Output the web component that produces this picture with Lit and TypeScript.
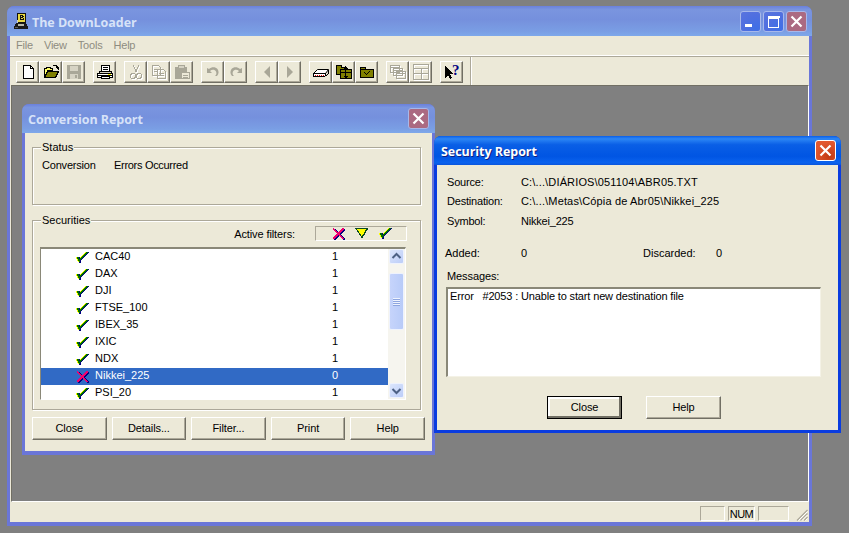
import { LitElement, html, css, svg } from "lit";
import { customElement } from "lit/decorators.js";

const ico = (body: unknown, cls = "") =>
  html`<svg class="ico ${cls}" viewBox="0 0 16 16" width="16" height="16" shape-rendering="crispEdges">${body}</svg>`;

const I = {
  newDoc: ico(svg`<path d="M3.500 1.500h7l3 3v10h-10z" fill="#fff" stroke="#000"/><path d="M10.500 1.500v3h3" fill="none" stroke="#000"/>`),
  open: ico(svg`<path d="M1.500 13.500v-9h2v-1h4v1h2v2h-5l-3 7z" fill="#ffff66" stroke="#000"/><path d="M1.500 13.500l3-6h11l-3 6z" fill="#808000" stroke="#000"/><path d="M10 1.500h3l2 2v2M15 5l-1.500-1.500M15 5l1-1.500" fill="none" stroke="#000"/>`),
  save: ico(svg`<rect x="1" y="1" width="14" height="14" fill="#a9a798"/><rect x="4" y="2" width="8" height="5" fill="#d6d3c4"/><rect x="4" y="10" width="8" height="5" fill="#d6d3c4"/><rect x="9" y="11" width="2" height="3" fill="#a9a798"/>`),
  print: ico(svg`<path d="M4.500 1.500h8v6h-8z" fill="#fff" stroke="#000"/><path d="M2.500 7.500h12v5h-12z" fill="#d6d3c4" stroke="#000"/><path d="M0.500 9.500h15v4h-15z" fill="#fff" stroke="#000"/><path d="M4.500 12.500h8v2h-8z" fill="#fff" stroke="#000"/><path d="M6 3.500h5M6 5.500h5M1 11.500h14" stroke="#000"/><rect x="11" y="10" width="3" height="1" fill="#ffff00"/>`),
  cut: ico(svg`<g class="off"><path d="M5.500 1.500l3 7M10.500 1.500l-3 7"/><circle cx="5" cy="12" r="2.500"/><circle cx="11" cy="12" r="2.500"/></g>`),
  copy: ico(svg`<g class="off"><path d="M1.500 1.500h6l2 2v8h-8z"/><path d="M6.500 5.500h6l2 2v7h-8z"/><path d="M3 5h4M3 7h3M8 9h5M8 11h5"/></g>`),
  paste: ico(svg`<rect x="1" y="3" width="12" height="12" rx="1" fill="#a9a798"/><rect x="4" y="1" width="6" height="3" fill="#d6d3c4" stroke="#a9a798"/><path d="M7.500 8.500h8v6h-8z" fill="#ece9d8" stroke="#a9a798"/><path d="M9 11h5M9 13h5" stroke="#a9a798"/>`),
  undo: ico(svg`<path d="M2 4v5h5l-2-2c2-2 5-1.500 6 .5 1 2 0 3.500-1 4.500h2c2-2 2-5 .5-7-2-2.500-6-2.500-8.500 0z" fill="#a9a798" shape-rendering="auto"/>`),
  redo: ico(svg`<path d="M14 4v5H9l2-2C9 5 6 5.500 5 7.500c-1 2 0 3.500 1 4.500H4C2 10 2 7 3.500 5c2-2.500 6-2.500 8.500 0z" fill="#a9a798" shape-rendering="auto"/>`),
  back: ico(svg`<path d="M11 2v12L5 8z" fill="#a9a798" shape-rendering="auto"/>`),
  fwd: ico(svg`<path d="M5 2v12l6-6z" fill="#a9a798" shape-rendering="auto"/>`),
  modem: ico(svg`<path d="M0.500 9.500l4-4h11l-3 4z" fill="#fff" stroke="#000" shape-rendering="auto"/><path d="M0.500 9.500h12v3h-12z" fill="#fff" stroke="#000"/><path d="M12.500 12.500l3-3v-4" fill="#d6d3c4" stroke="#000"/><path d="M2 11h1M4 11h1M6 11h1M8 11h1M10 11h1" stroke="#e00000"/>`),
  folderMove: ico(svg`<path d="M0.500 1.500h5v2h5v7h-10z" fill="#808000" stroke="#000"/><path d="M4.500 5.500h11v9h-11z" fill="#808000" stroke="#000"/><path d="M9.500 2v12M7.500 4h4M8.500 3h2M7.500 12h4M8.500 13h2M5 8.500h10" stroke="#000"/>`),
  folderCheck: ico(svg`<path d="M1.500 3.500h5v2h8v8h-13z" fill="#808000" stroke="#000"/><path d="M2 5.500h12" stroke="#000"/><path d="M5 8h1v1h1v1h1V9h1V8h1V7h1v1h-1v1H9v1H8v1H7v-1H6V9H5z" fill="#000"/>`),
  cascade: ico(svg`<g class="off"><path d="M0.500 1.500h9v7h-9z"/><path d="M3.500 4.500h9v7h-9z"/><path d="M6.500 7.500h9v7h-9z"/><path d="M1 3.500h8M4 6.500h8M7 9.500h8"/></g>`),
  tile: ico(svg`<g class="off"><path d="M0.500 0.500h15v15h-15z"/><path d="M1 4.500h14M1 9.500h14M8 5v10"/></g>`),
  help: html`<svg class="ico" viewBox="0 0 16 16" width="16" height="16" shape-rendering="crispEdges"><path d="M1 2v12l3-3 2 4 2-1-2-4h4z" fill="#000"/><text class="qm" x="8" y="11">?</text></svg>`,
};

/* pixel runs [x, y, width] turned into one path */
const runs = (list: number[][]) => list.map(([x, y, w]) => `M${x} ${y}h${w}v1h-${w}z`).join("");
const checkYellow = runs([[9,0,1],[8,1,1],[7,2,1],[6,3,1],[5,4,1],[4,5,1],[0,5,1],[3,6,1],[0,6,1],[1,7,1],[1,8,1],[2,9,1]]);
const checkGreen = runs([[10,0,2],[9,1,2],[8,2,2],[7,3,2],[6,4,2],[5,5,2],[1,5,2],[4,6,2],[1,6,2],[2,7,3],[2,8,2],[3,9,1]]);
const checkNavy = runs([[12,0,1],[11,1,1],[10,2,1],[9,3,1],[8,4,1],[7,5,1],[3,5,1],[6,6,1],[3,6,1],[5,7,1],[4,8,1],[4,9,1],[3,10,2]]);
const check = svg`<g transform="translate(0 1)"><path d=${checkYellow} fill="#ffff00"/><path d=${checkGreen} fill="#007000"/><path d=${checkNavy} fill="#000080"/></g>`;
const cross = svg`<path d="M1.500 1.500l10.500 10.500M12 1.500l-10.500 10.500" transform="translate(.8 .8)" stroke="#000080" stroke-width="2"/><path d="M1 1.500l10.500 10.500M11.500 1.500l-10.500 10.500" stroke="#f0006e" stroke-width="2"/>`;
const tri = svg`<path d="M1 1.500h11.500l-5.500 9z" fill="#ffff00" stroke="#0a4a20" stroke-width="1.300"/>`;
const mark = (b: unknown) => html`<svg class="mark" viewBox="0 0 13 13" width="13" height="13">${b}</svg>`;

const glyph = {
  min: html`<svg viewBox="0 0 21 21" width="21" height="21" shape-rendering="crispEdges"><rect x="5" y="13" width="7" height="3" fill="#fff"/></svg>`,
  max: html`<svg viewBox="0 0 21 21" width="21" height="21" shape-rendering="crispEdges"><path d="M5 5.500h11v1h-11zM5.500 5v11h10V5" fill="none" stroke="#fff"/><rect x="5" y="5" width="11" height="3" fill="#fff"/></svg>`,
  close: html`<svg viewBox="0 0 21 21" width="21" height="21"><path d="M5.500 5.500l10 10M15.500 5.500l-10 10" stroke="#fff" stroke-width="2.200"/></svg>`,
};

const up = html`<svg viewBox="0 0 15 15" width="15" height="15"><path d="M3.500 9l4-4 4 4" fill="none" stroke="#4d6185" stroke-width="2"/></svg>`;
const down = html`<svg viewBox="0 0 15 15" width="15" height="15"><path d="M3.500 6l4 4 4-4" fill="none" stroke="#4d6185" stroke-width="2"/></svg>`;

const toolGroups = [
  [I.newDoc, I.open, I.save],
  [I.print],
  [I.cut, I.copy, I.paste],
  [I.undo, I.redo],
  [I.back, I.fwd],
  [I.modem, I.folderMove, I.folderCheck],
  [I.cascade, I.tile],
  [I.help],
];

const rows: [string, number, boolean][] = [
  ["CAC40", 1, true], ["DAX", 1, true], ["DJI", 1, true], ["FTSE_100", 1, true],
  ["IBEX_35", 1, true], ["IXIC", 1, true], ["NDX", 1, true], ["Nikkei_225", 0, false], ["PSI_20", 1, true],
];

@customElement("app-root")
export class AppRoot extends LitElement {
  static styles = css`
    :host { display:block; position:relative; width:849px; height:533px; background:#808080; overflow:hidden;
      font:11px "Liberation Sans", Arial, sans-serif; letter-spacing:-.2px; color:#000; }
    .win { position:absolute; display:flex; flex-direction:column; box-sizing:border-box; border-radius:7px 7px 0 0;
      background:#6a76d8; }
    .main { left:7px; top:6px; width:805px; height:520px; padding:0 3px 4px; }
    .conv { left:22px; top:104px; width:413px; height:351px; padding:0 3px 4px; }
    .sec { left:434px; top:136px; width:407px; height:297px; padding:0 3px 3px; background:#0a3ce0; }

    .title { display:flex; align-items:center; flex:none; margin:0 -3px; padding:0 3px 0 7px; border-radius:7px 7px 0 0;
      background:linear-gradient(180deg,#6a80dc 0,#7a95df 12%,#7590dd 45%,#7a9ee4 85%,#7ea8ea 100%); }
    .main > .title { height:30px; padding-right:5px; }
    .conv > .title { height:29px; padding:0 6px 0 6px; }
    .sec > .title { height:29px; padding:0 5px 0 7px;
      background:linear-gradient(180deg,#0a5fe8 0,#2c86f5 10%,#0a5fe6 30%,#0055e3 70%,#0a62ee 92%,#0a55dc 100%); }
    .cap { flex:1; font:bold 12.500px "Open Sans","Liberation Sans",sans-serif; color:#d6e2f8; white-space:nowrap; letter-spacing:-.05px; padding-top:1px; }
    .main .cap { padding-top:3px; }
    .sec .cap { color:#fff; text-shadow:1px 1px 0 #0f1f80; }
    .appicon { margin-right:4px; flex:none; }
    .caps { display:flex; gap:2px; }
    .cb { width:21px; height:21px; box-sizing:border-box; border-radius:3px; border:1px solid #a7b8ea;
      background:radial-gradient(circle at 80% 85%,#3f6fe6,#4f6fe0 55%,#5a74de); display:flex; align-items:center; justify-content:center; }
    .cb svg { margin:-1px; flex:none; }
    .cb.x { background:#ab6a82; }
    .sec .cb.x { background:radial-gradient(circle at 70% 80%,#c23a14,#e2582f 70%); border-color:#fff; }

    .client { flex:1; min-height:0; background:#ece9d8; display:flex; flex-direction:column; }
    .menubar { height:20px; flex:none; box-sizing:border-box; display:flex; align-items:center; gap:11px; padding:0 0 1px 6px; color:#8e8c80;
      border-bottom:1px solid #fff; box-shadow:0 1px 0 #aca899; }
    .toolbar { height:28px; flex:none; margin-top:1px; box-sizing:border-box; display:flex; gap:8px; padding:4px 0 0 6px; }
    .tgroup { display:flex; }
    .tb { width:23px; height:22px; box-sizing:border-box; display:flex; align-items:center; justify-content:center;
      border:1px solid; border-color:#fff #716f64 #716f64 #fff; box-shadow:inset -1px -1px 0 #aca899; }
    .sep { width:0; height:28px; margin:-4px 0 0 -1px; border-left:1px solid #aca899; border-right:1px solid #fff; }
    .ico { display:block; overflow:visible; }
    .off { fill:none; stroke:#a9a798; filter:drop-shadow(1px 1px 0 #fff); }
    .qm { font:bold 15px "Liberation Serif",serif; fill:#000080; }

    .mdi { flex:1; min-height:0; margin:0 0 0 1px; background:#808080; border-style:solid; border-width:1px;
      border-color:#716f64 #fff #fff #716f64; }
    .status { height:20px; flex:none; box-sizing:border-box; display:flex; justify-content:flex-end; align-items:flex-end; gap:3px; padding:0 1px 1px 0; }
    .pane { height:15px; box-sizing:border-box; border:1px solid; border-color:#aca899 #fff #fff #aca899; line-height:14px; text-align:center; }
    .p1 { width:25px; } .p2 { width:27px; letter-spacing:-.5px; } .p3 { width:31px; }
    .grip { margin-left:4px; }

    .cclient { padding:14px 7px 0; gap:0; }
    .group { position:relative; box-sizing:border-box; border:1px solid #aca899; box-shadow:1px 1px 0 #fff, inset 1px 1px 0 #fff; width:389px; }
    .legend { position:absolute; left:8px; top:-8px; padding:0 1px; background:#ece9d8; line-height:14px; letter-spacing:0; }
    .gstatus { height:58px; padding:11px 9px 0; display:flex; }
    .gstatus .k { width:72px; }
    .gstatus span:last-child { letter-spacing:-.3px; }
    .gsec { height:190px; margin-top:15px; padding:5px 14px 0 7px; }
    .filters { display:flex; justify-content:flex-end; align-items:center; gap:20px; height:15px; margin-right:-1px; letter-spacing:-.1px; }
    .fbox { width:92px; height:15px; box-sizing:border-box; border:1px solid; border-color:#aca899 #fff #fff #aca899;
      padding-left:16px; display:flex; align-items:center; gap:10px; }
    .fbox .mark:last-child { margin-left:1px; }
    .mark { display:block; flex:none; overflow:visible; shape-rendering:crispEdges; }
    .list { width:366px; height:153px; margin:6px 0 0; box-sizing:border-box; display:flex; overflow:hidden; background:#fff;
      border-style:solid; border-width:2px 1px 1px; border-color:#8a8878 #fff #fff #8a8878; letter-spacing:0; }
    .rows { width:347px; flex:none; overflow:hidden; }
    .row { display:grid; grid-template-columns:36px 18px 237px 1fr; height:17px; align-items:center; }
    .row span { line-height:15px; padding-bottom:2px; }
    .row .mark { margin-left:-1px; margin-top:-1px; }
    .row.on { background:#316ac5; color:#fff; }
    .sb { width:17px; flex:none; background:#f6f5ef; display:flex; flex-direction:column; padding:0 1px; box-sizing:border-box; }
    .sbb { width:15px; height:15px; flex:none; border:1px solid #eef2fd; box-sizing:border-box; border-radius:2px;
      background:linear-gradient(135deg,#dce6fc,#bccdf8); display:flex; align-items:center; justify-content:center; }
    .sbb svg { margin:-1px; flex:none; }
    .thumb { width:15px; height:57px; margin:9px 0 auto; box-sizing:border-box; border:1px solid #eef2fd; border-radius:2px;
      background:linear-gradient(90deg,#c6d4fb,#b8cbf8); display:flex; flex-direction:column; align-items:center; justify-content:center; gap:1px; }
    .thumb i { display:block; width:7px; height:1px; background:#eef3fe; box-shadow:0 1px 0 #8ea6e0; }
    .sbb.dn { margin-bottom:1px; }
    .btns { display:flex; }
    .cbtns { gap:5px; margin-top:7px; }
    .btn { width:75px; height:23px; box-sizing:border-box; display:flex; align-items:center; justify-content:center;
      border:1px solid; border-color:#fff #716f64 #716f64 #fff; box-shadow:inset -1px -1px 0 #aca899; background:#ece9d8; padding-bottom:1px; letter-spacing:-.1px; }
    .btn.def { outline:1px solid #000; outline-offset:-1px; box-shadow:inset -2px -2px 0 #716f64, inset 2px 2px 0 #fff; }

    .sclient { padding:7px 0 0 10px; }
    .info { display:grid; grid-template-columns:74px 1fr; grid-template-rows:19px 20px 20px; align-items:center; }
    .info .path { letter-spacing:.15px; }
    .nums { display:grid; grid-template-columns:76px 122px 73px 1fr; height:20px; margin:12px 0 0 -2px; align-items:center; letter-spacing:0; }
    .msgl { height:16px; line-height:16px; margin-top:5px; letter-spacing:-.1px; }
    .msgs { width:375px; height:90px; margin:3px 0 0 -1px; box-sizing:border-box; background:#fff; padding:1px 2px;
      border:1px solid; border-width:2px 1px 1px 2px; border-color:#8a8878 #f4f2e6 #f4f2e6 #8a8878; white-space:pre; letter-spacing:-.15px; }
    .sbtns { gap:24px; margin:19px 0 0 100px; }
  `;

  private title(text: string, buttons: unknown, icon?: unknown) {
    return html`<div class="title">${icon}<span class="cap">${text}</span><div class="caps">${buttons}</div></div>`;
  }

  render() {
    const appIcon = html`<svg class="appicon" viewBox="0 0 14 16" width="14" height="16" shape-rendering="crispEdges">
      <rect x="3" y="0" width="9" height="12" fill="#111"/><rect x="4" y="1" width="7" height="8" fill="#e8d840"/>
      <path d="M6 2h3v1h1v1H9v1h1v2H6zM7 3v1h1V3zM7 5v1h2V5z" fill="#111"/>
      <rect x="3" y="7" width="1" height="4" fill="#d0d0c8"/>
      <path d="M2 10h10l2 4v2H0v-2z" fill="#1a1a1a"/><rect x="4" y="11" width="6" height="2" fill="#b8b8a8"/><rect x="1" y="14" width="3" height="1" fill="#606060"/></svg>`;
    return html`
      <div class="win main">
        ${this.title("The DownLoader", html`
          <div class="cb">${glyph.min}</div><div class="cb">${glyph.max}</div><div class="cb x">${glyph.close}</div>`, appIcon)}
        <div class="client">
          <div class="menubar"><span>File</span><span>View</span><span>Tools</span><span>Help</span></div>
          <div class="toolbar">
            ${toolGroups.map((g) => html`<div class="tgroup">${g.map((i) => html`<div class="tb">${i}</div>`)}</div>`)}
            <div class="sep"></div>
          </div>
          <div class="mdi"></div>
          <div class="status">
            <div class="pane p1"></div><div class="pane p2">NUM</div><div class="pane p3"></div>
            <svg class="grip" viewBox="0 0 12 12" width="12" height="12" shape-rendering="auto">
              <path d="M11.500 1L1 11.500M11.500 4.500L4.500 11.500M11.500 8L8 11.500" stroke="#aca899" stroke-width="1.200"/>
              <path d="M11.500 2.500L2.500 11.500M11.500 6L6 11.500M11.500 9.500L9.500 11.500" stroke="#fff"/></svg>
          </div>
        </div>
      </div>

      <div class="win conv">
        ${this.title("Conversion Report", html`<div class="cb x">${glyph.close}</div>`)}
        <div class="client cclient">
          <div class="group gstatus">
            <span class="legend">Status</span>
            <span class="k">Conversion</span><span>Errors Occurred</span>
          </div>
          <div class="group gsec">
            <span class="legend">Securities</span>
            <div class="filters">
              <span>Active filters:</span>
              <div class="fbox">${mark(cross)}${mark(tri)}${mark(check)}</div>
            </div>
            <div class="list">
              <div class="rows">
                ${rows.map(([n, c, ok]) => html`<div class="row ${ok ? "" : "on"}"><span></span>${mark(ok ? check : cross)}<span>${n}</span><span>${c}</span></div>`)}
              </div>
              <div class="sb">
                <div class="sbb">${up}</div>
                <div class="thumb"><i></i><i></i><i></i><i></i></div>
                <div class="sbb dn">${down}</div>
              </div>
            </div>
          </div>
          <div class="btns cbtns">
            ${["Close", "Details...", "Filter...", "Print", "Help"].map((b) => html`<div class="btn">${b}</div>`)}
          </div>
        </div>
      </div>

      <div class="win sec">
        ${this.title("Security Report", html`<div class="cb x">${glyph.close}</div>`)}
        <div class="client sclient">
          <div class="info">
            <span>Source:</span><span class="path">C:\\...\\DIÁRIOS\\051104\\ABR05.TXT</span>
            <span>Destination:</span><span class="path">C:\\...\\Metas\\Cópia de Abr05\\Nikkei_225</span>
            <span>Symbol:</span><span>Nikkei_225</span>
          </div>
          <div class="nums"><span>Added:</span><span>0</span><span>Discarded:</span><span>0</span></div>
          <div class="msgl">Messages:</div>
          <div class="msgs">Error   #2053 : Unable to start new destination file</div>
          <div class="btns sbtns"><div class="btn def">Close</div><div class="btn">Help</div></div>
        </div>
      </div>
    `;
  }
}
